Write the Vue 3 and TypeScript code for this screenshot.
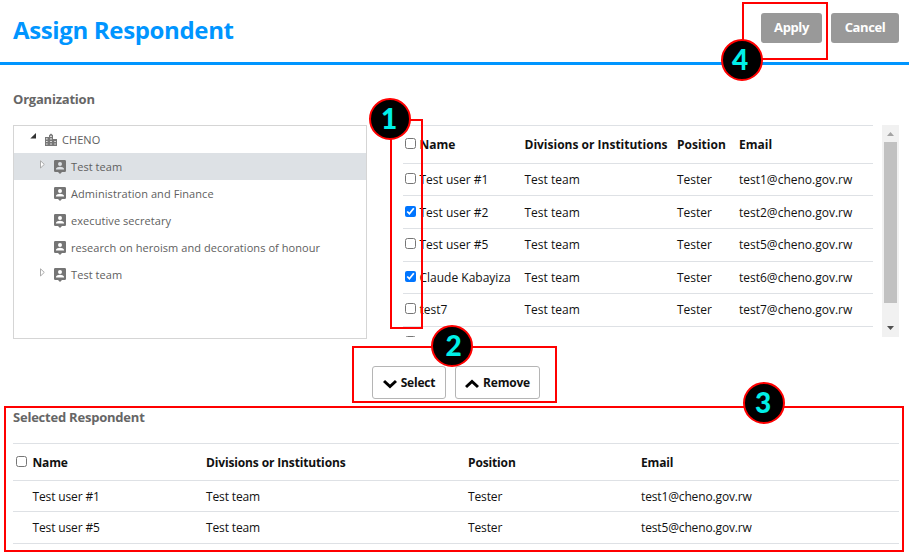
<script setup lang="ts">
interface Person {
  name: string
  division: string
  position: string
  email: string
  checked?: boolean
}

interface TreeItem {
  label: string
  expandable: boolean
  active: boolean
}

const tree: TreeItem[] = [
  { label: 'Test team', expandable: true, active: true },
  { label: 'Administration and Finance', expandable: false, active: false },
  { label: 'executive secretary', expandable: false, active: false },
  { label: 'research on heroism and decorations of honour', expandable: false, active: false },
  { label: 'Test team', expandable: true, active: false },
]

const person = (name: string, n: number, checked = false): Person => ({
  name,
  division: 'Test team',
  position: 'Tester',
  email: `test${n}@cheno.gov.rw`,
  checked,
})

const people: Person[] = [
  person('Test user #1', 1),
  person('Test user #2', 2, true),
  person('Test user #5', 5),
  person('Claude Kabayiza', 6, true),
  person('test7', 7),
]

const selected: Person[] = [person('Test user #1', 1), person('Test user #5', 5)]
</script>

<template>
  <main class="page">
    <header class="header">
      <h1>Assign Respondent</h1>
      <div class="actions">
        <button class="btn apply">Apply</button>
        <button class="btn cancel">Cancel</button>
      </div>
    </header>

    <h2 class="section-title org-title">Organization</h2>

    <section class="panels">
      <div class="tree">
        <div class="node root">
          <svg class="caret" viewBox="0 0 7 6"><path d="M6 0V5.5H0.3Z" fill="#333" /></svg>
          <svg class="icon city" viewBox="0 0 14 14">
            <path fill="#777" fill-rule="evenodd" d="M1 4h4V2.200L7 .5l2 1.700V6h4v7H1ZM2.200 5.300v1.200h1.300V5.300Zm0 2.600v1.200h1.300V7.900Zm0 2.500v1.200h1.300v-1.200ZM6.300 2.800v1.200h1.400V2.800Zm0 2.500v1.200h1.400V5.300Zm0 2.600v1.200h1.400V7.900Zm0 2.500v1.200h1.400v-1.200Zm4.100-2.500v1.200h1.300V7.900Zm0 2.500v1.200h1.300v-1.200Z" />
          </svg>
          <span>CHENO</span>
        </div>
        <div v-for="(item, i) in tree" :key="i" class="node child" :class="{ active: item.active }">
          <svg class="caret" viewBox="0 0 6 9">
            <path v-if="item.expandable" d="M1.500 .8V8L5.300 4.400Z" fill="#fff" stroke="#a3a3a3" stroke-width=".9" />
          </svg>
          <svg class="icon" viewBox="0 0 12 14">
            <path fill="#757575" fill-rule="evenodd" d="M1.300 0h9.400Q12 0 12 1.300v9.400Q12 12 10.700 12H8L6 14 4 12H1.300Q0 12 0 10.700V1.300Q0 0 1.300 0ZM6 1.900a2 2 0 1 0 0 4 2 2 0 1 0 0-4ZM2 9.400h8v-.6C10 7.500 7.300 6.800 6 6.800S2 7.500 2 8.800Z" />
          </svg>
          <span>{{ item.label }}</span>
        </div>
      </div>

      <div class="list">
        <div class="table people">
          <div class="row head">
            <input type="checkbox" /><span>Name</span><span>Divisions or Institutions</span><span>Position</span><span>Email</span>
          </div>
          <div v-for="p in people" :key="p.email" class="row">
            <input type="checkbox" :checked="p.checked" /><span>{{ p.name }}</span><span>{{ p.division }}</span><span>{{ p.position }}</span><span>{{ p.email }}</span>
          </div>
          <div class="row"><input type="checkbox" /></div>
        </div>
        <div class="scrollbar">
          <svg class="arrow" viewBox="0 0 17 17"><path d="M5 11 8.500 7 12 11Z" fill="#a3a3a3" /></svg>
          <div class="thumb"></div>
          <svg class="arrow" viewBox="0 0 17 17"><path d="M5 6 8.500 10 12 6Z" fill="#505050" /></svg>
        </div>
      </div>
    </section>

    <section class="transfer">
      <button class="move select">
        <svg viewBox="0 0 14 10"><path d="M1 2 7 7.500 13 2" /></svg><span>Select</span>
      </button>
      <button class="move remove">
        <svg viewBox="0 0 14 10"><path d="M1 8 7 2.500 13 8" /></svg><span>Remove</span>
      </button>
    </section>

    <h2 class="section-title">Selected Respondent</h2>
    <div class="table chosen">
      <div class="row head">
        <input type="checkbox" /><span>Name</span><span>Divisions or Institutions</span><span>Position</span><span>Email</span>
      </div>
      <div v-for="p in selected" :key="p.email" class="row">
        <i></i><span>{{ p.name }}</span><span>{{ p.division }}</span><span>{{ p.position }}</span><span>{{ p.email }}</span>
      </div>
    </div>

    <!-- Step callouts laid over the form -->
    <div class="frame f1"></div>
    <div class="frame f2"></div>
    <div class="frame f3"></div>
    <div class="frame f4"></div>
    <div class="badge b1">1</div>
    <div class="badge b2">2</div>
    <div class="badge b3">3</div>
    <div class="badge b4">4</div>
  </main>
</template>

<style>
body {
  margin: 0;
  background: #fff;
}
</style>

<style scoped>
* {
  box-sizing: border-box;
}
.page {
  position: relative;
  width: 909px;
  height: 556px;
  overflow: hidden;
  background: #fff;
  font-family: 'Open Sans', 'Noto Sans', sans-serif;
  font-size: 12px;
  color: #111;
}
.header {
  display: flex;
  justify-content: space-between;
  height: 65px;
  padding: 13px 10px 0 13px;
  border-bottom: 3px solid #0095ff;
}
h1 {
  margin: 0;
  font-size: 24px;
  line-height: 34px;
  font-weight: 700;
  letter-spacing: -0.35px;
  color: #0095ff;
}
.actions {
  display: flex;
  gap: 9px;
}
.btn {
  height: 30px;
  padding: 0 0 2px;
  border: 0;
  border-radius: 3px;
  background: #999;
  color: #fff;
  font: 700 13px 'Open Sans', sans-serif;
  letter-spacing: -0.4px;
}
.apply {
  width: 61px;
}
.cancel {
  width: 68px;
}
.section-title {
  margin: 0;
  padding-left: 13px;
  font-size: 13px;
  line-height: 20px;
  font-weight: 700;
  letter-spacing: -0.22px;
  color: #666;
}
.org-title {
  margin-top: 24px;
}
.panels {
  display: flex;
  margin: 16px 10px 0 13px;
  justify-content: space-between;
  height: 214px;
}
.tree {
  width: 354px;
  border: 1px solid #d5d5d5;
}
.node {
  display: flex;
  align-items: center;
  height: 27px;
  font-size: 11px;
  font-weight: 500;
  letter-spacing: 0.07px;
  color: #606060;
}
.root {
  padding-left: 16px;
}
.root .caret {
  width: 7px;
  height: 6px;
  margin: 0 7px 8px 0;
}
.root .icon {
  width: 14px;
  height: 14px;
  margin-right: 4px;
}
.child {
  padding-left: 25px;
}
.child .caret {
  width: 6px;
  height: 9px;
  margin: 0 9px 5px 0;
}
.child .icon {
  width: 12px;
  height: 14px;
  margin-right: 5px;
}
.active {
  background: #dde1e5;
}
.list {
  display: flex;
  justify-content: space-between;
  width: 496px;
  height: 212px;
  overflow: hidden;
}
.table {
  border-top: 1px solid #dee1e5;
}
.row {
  display: grid;
  align-items: center;
  border-bottom: 1px solid #dee1e5;
}
.row.head {
  font-weight: 700;
}
.row input {
  width: 11px;
  height: 11px;
  margin: 0;
}
.people {
  width: 470px;
}
.people .row {
  grid-template-columns: 14.500px 105px 152.500px 62px 1fr;
  height: 33px;
  padding-left: 2px;
  letter-spacing: 0;
}
.people .row:nth-child(3n + 2) {
  height: 32px;
}
.people .row:nth-child(4),
.people .row:nth-child(6) {
  padding-bottom: 1px;
}
.people .row:last-child {
  height: 31px;
}
.people .row.head {
  height: 38px;
}
.people input {
  margin-top: -2px;
}
.chosen {
  margin: 16px 10px 0 13px;
}
.chosen .row {
  grid-template-columns: 16.500px 173.500px 262px 173px 1fr;
  height: 32px;
  padding-left: 3px;
  letter-spacing: -0.14px;
}
.chosen .row:nth-child(2) {
  height: 31px;
}
.chosen .row.head {
  height: 37px;
}
.chosen input {
  margin-top: -1px;
}
.scrollbar {
  display: flex;
  flex-direction: column;
  width: 17px;
  height: 212px;
  background: #f1f1f1;
}
.arrow {
  width: 17px;
  height: 17px;
}
.thumb {
  width: 13px;
  height: 161px;
  margin: 0 2px 17px;
  background: #c1c1c1;
}
.transfer {
  display: flex;
  gap: 9px;
  margin: 27px 0 8px 372px;
}
.move {
  display: flex;
  align-items: center;
  justify-content: center;
  gap: 4px;
  height: 33px;
  padding: 0;
  border: 1px solid #b5b5b5;
  border-radius: 3px;
  background: #fff;
  color: #111;
  font: 700 12px 'Open Sans', sans-serif;
  letter-spacing: -0.2px;
}
.move svg {
  width: 14px;
  height: 10px;
  margin-top: 3px;
}
.move path {
  fill: none;
  stroke: #000;
  stroke-width: 3;
}
.select {
  width: 74px;
}
.remove {
  width: 85px;
}
.frame {
  position: absolute;
  border: 2px solid #f00;
}
.f1 {
  left: 390px;
  top: 119px;
  width: 33px;
  height: 210px;
}
.f2 {
  left: 352px;
  top: 346px;
  width: 205px;
  height: 57px;
}
.f3 {
  left: 4px;
  top: 406px;
  width: 900px;
  height: 146px;
}
.f4 {
  left: 742px;
  top: 2px;
  width: 86px;
  height: 58px;
}
.badge {
  position: absolute;
  width: 42px;
  height: 42px;
  border: 2px solid #f00;
  border-radius: 50%;
  background: #000;
  color: #00f0e8;
  font-family: Lato, 'Open Sans', sans-serif;
  font-size: 28px;
  font-weight: 900;
  line-height: 36px;
  text-align: center;
}
.b1 {
  left: 369px;
  top: 98px;
  padding-right: 2px;
}
.b2 {
  left: 431px;
  top: 325px;
  padding-left: 3px;
}
.b3 {
  left: 743px;
  top: 382px;
  padding-right: 2px;
}
.b4 {
  left: 721px;
  top: 39px;
  padding-right: 4px;
}
</style>
